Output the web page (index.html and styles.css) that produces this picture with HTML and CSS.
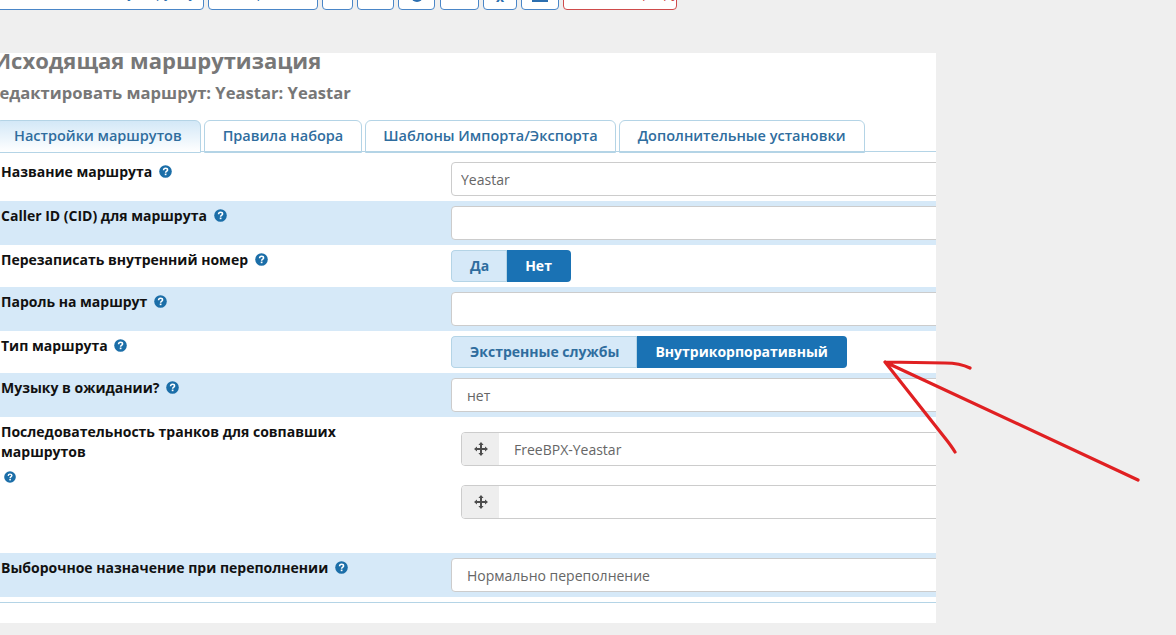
FILE: index.html
```html
<!DOCTYPE html>
<html lang="ru">
<head>
    <meta charset="UTF-8">
    <title>Исходящая маршрутизация</title>
    <link rel="stylesheet" href="styles.css">
</head>
<body>
    <svg class="defs" width="0" height="0">
        <symbol id="help" viewBox="0 0 12 12">
            <circle cx="6" cy="6" r="5.8" fill="#1b6ea8"/>
            <path d="M4.2 4.9C4.3 3.7 5 3.1 6 3.1C7.1 3.1 7.9 3.7 7.9 4.6C7.9 5.7 6.2 5.7 6.1 7.1" fill="none" stroke="#fff" stroke-width="1.4"/>
            <rect x="5.3" y="7.9" width="1.6" height="1.5" fill="#fff"/>
        </symbol>
        <symbol id="move" viewBox="0 0 14 14">
            <path d="M7 1V13M1 7H13" fill="none" stroke="#4d4d4d" stroke-width="2"/>
            <path d="M7 0L9.6 3H4.4ZM7 14L9.6 11H4.4ZM0 7L3 4.4V9.6ZM14 7L11 4.4V9.6Z" fill="#4d4d4d"/>
        </symbol>
    </svg>

    <div class="toolbar">
        <button class="tool tool-wide">Добавить исходящую группу</button>
        <button class="tool tool-mid">Копировать</button>
        <button class="tool tool-s1 tool-icon">•</button>
        <button class="tool tool-s2"></button>
        <button class="tool tool-s3 tool-icon"><span class="tool-round"></span></button>
        <button class="tool tool-s4"></button>
        <button class="tool tool-s3b tool-icon">x</button>
        <button class="tool tool-s5 tool-icon"><span class="tool-bar"></span></button>
        <button class="tool tool-red">Удалить маршрут</button>
    </div>

    <div class="panel">
        <h2 class="title">Исходящая маршрутизация</h2>
        <h3 class="subtitle">Редактировать маршрут: Yeastar: Yeastar</h3>

        <ul class="tabs">
            <li class="tab tab-active">Настройки маршрутов</li>
            <li class="tab">Правила набора</li>
            <li class="tab tab-narrow">Шаблоны Импорта/Экспорта</li>
            <li class="tab">Дополнительные установки</li>
        </ul>

        <div class="row row-first">
            <label class="label">Название маршрута <svg class="help"><use href="#help"/></svg></label>
            <input class="field" type="text" value="Yeastar">
        </div>
        <div class="row row-blue">
            <label class="label">Caller ID (CID) для маршрута <svg class="help"><use href="#help"/></svg></label>
            <input class="field" type="text">
        </div>
        <div class="row">
            <label class="label">Перезаписать внутренний номер <svg class="help"><use href="#help"/></svg></label>
            <div class="toggle">
                <span class="opt">Да</span>
                <span class="opt opt-on">Нет</span>
            </div>
        </div>
        <div class="row row-blue">
            <label class="label">Пароль на маршрут <svg class="help"><use href="#help"/></svg></label>
            <input class="field" type="text">
        </div>
        <div class="row">
            <label class="label">Тип маршрута <svg class="help"><use href="#help"/></svg></label>
            <div class="toggle">
                <span class="opt">Экстренные службы</span>
                <span class="opt opt-on">Внутрикорпоративный</span>
            </div>
        </div>
        <div class="row row-blue">
            <label class="label">Музыку в ожидании? <svg class="help"><use href="#help"/></svg></label>
            <input class="field field-select" type="text" value="нет">
        </div>
        <div class="row row-trunks">
            <label class="label label-wrap">Последовательность транков для совпавших маршрутов
                <svg class="help help-block"><use href="#help"/></svg>
            </label>
            <div class="trunks">
                <div class="trunk">
                    <span class="grip"><svg class="move"><use href="#move"/></svg></span>
                    <input class="trunk-input" type="text" value="FreeBPX-Yeastar">
                </div>
                <div class="trunk">
                    <span class="grip"><svg class="move"><use href="#move"/></svg></span>
                    <input class="trunk-input" type="text">
                </div>
            </div>
        </div>
        <div class="row row-blue">
            <label class="label">Выборочное назначение при переполнении <svg class="help"><use href="#help"/></svg></label>
            <input class="field field-select" type="text" value="Нормально переполнение">
        </div>
        <div class="panel-end"></div>
    </div>

    <!-- стрелка нарисована поверх скриншота -->
    <svg class="arrow" width="1176" height="635">
        <path d="M970 368C962 364 955 363 945 363L885 362L1138 480M885 362L945 438C949 443 952 447 955 452" fill="none" stroke="#e02022" stroke-width="3.2" stroke-linecap="round" stroke-linejoin="round"/>
    </svg>
</body>
</html>
```

FILE: styles.css
```css
/*Страница*/
html, body {
    margin: 0;
    height: 635px;
    overflow: hidden;
}

body {
    position: relative;
    background-color: #efefef;
    font-family: "Open Sans", "Noto Sans", sans-serif;
    font-size: 14px;
    color: #111;
}

.defs {
    position: absolute;
}

/*Панель кнопок, срезанная верхним краем окна*/
.toolbar {
    display: flex;
    height: 53px;
    margin-left: -10px;
}

.tool {
    height: 40px;
    margin-top: -30px;
    margin-right: 4px;
    padding: 3px 0 0;
    border: 1px solid #4a86c8;
    border-radius: 4px;
    background-color: #fff;
    color: #2c6fb0;
    font-family: inherit;
    font-size: 14px;
    line-height: 20px;
    overflow: hidden;
    white-space: nowrap;
}

.tool-icon {
    padding-top: 14px;
}

.tool-wide {
    width: 214px;
}

.tool-mid {
    width: 110px;
}

.tool-s1 {
    width: 31px;
}

.tool-s2 {
    width: 37px;
}

.tool-s3 {
    width: 37px;
    margin-right: 5px;
}

.tool-s4 {
    width: 39px;
}

.tool-s3b {
    width: 34px;
    font-weight: 700;
}

.tool-s5 {
    width: 38px;
}

.tool-red {
    width: 114px;
    margin-right: 0;
    border-color: #cf4b4b;
    color: #cf4b4b;
}

.tool-round {
    display: inline-block;
    width: 12px;
    height: 12px;
    border-radius: 50%;
    background-color: #2c6fb0;
}

.tool-bar {
    display: inline-block;
    width: 16px;
    height: 12px;
    background-color: #2c6fb0;
}

/*Белая панель с формой*/
.panel {
    width: 936px;
    height: 570px;
    background-color: #fff;
    overflow: hidden;
}

.title {
    margin: -2px 0 0 -7px;
    font-size: 22px;
    line-height: 18px;
    font-weight: 700;
    color: #777;
}

.subtitle {
    margin: 14px 0 0 -11px;
    font-size: 16.6px;
    line-height: 20px;
    font-weight: 700;
    color: #777;
}

/*Вкладки*/
.tabs {
    display: flex;
    gap: 3px;
    height: 31px;
    margin: 17px 0 0;
    padding: 0;
    list-style: none;
    border-bottom: 1px solid #b4d4e6;
}

.tab {
    height: 31px;
    padding: 0 18px;
    border: 1px solid #b4d4e6;
    border-radius: 6px 6px 0 0;
    font-size: 14.5px;
    font-weight: 600;
    line-height: 30px;
    color: #2f6d9e;
    white-space: nowrap;
}

.tab-active {
    margin-left: -5px;
    background: linear-gradient(#d3e8f7, #fff);
}

.tab-narrow {
    padding-right: 17px;
    padding-left: 17px;
}

/*Строки формы*/
.row {
    display: grid;
    grid-template-columns: 451px 1fr;
    padding: 5px 0;
}

.row-first {
    padding-top: 10px;
}

.row-blue {
    background-color: #d6e9f8;
}

.row-trunks {
    padding-bottom: 34px;
}

.label {
    padding-left: 1px;
    font-weight: 700;
    line-height: 20px;
}

.label-wrap {
    display: block;
    max-width: 345px;
}

.help {
    width: 13px;
    height: 13px;
    margin-left: 3px;
    vertical-align: -1px;
}

.help-block {
    display: block;
    width: 12px;
    height: 12px;
    margin: 9px 0 0 3px;
}

.field {
    box-sizing: border-box;
    width: 600px;
    height: 34px;
    padding: 0 9px;
    border: 1px solid #ccc;
    border-radius: 4px;
    background-color: #fff;
    color: #666;
    font-family: inherit;
    font-size: 14px;
}

.field-select {
    padding-left: 15px;
}

/*Переключатели*/
.toggle {
    display: flex;
    justify-self: start;
    height: 32px;
    border-radius: 4px;
    overflow: hidden;
}

.opt {
    padding: 0 18px 0 19px;
    background-color: #d6e9f8;
    box-shadow: inset 0 0 0 1px #b4d4e6;
    border-radius: 4px 0 0 4px;
    color: #2f6d9e;
    font-weight: 700;
    line-height: 32px;
}

.opt-on {
    padding: 0 19px 0 18px;
    background-color: #1a72b4;
    box-shadow: none;
    border-radius: 0;
    color: #fff;
}

/*Транки*/
.trunks {
    display: flex;
    flex-direction: column;
    gap: 19px;
    padding: 10px 0 0 10px;
}

.trunk {
    display: flex;
    box-sizing: border-box;
    width: 600px;
    height: 34px;
    border: 1px solid #ccc;
    border-radius: 4px;
    overflow: hidden;
}

.grip {
    display: flex;
    align-items: center;
    justify-content: center;
    width: 37px;
    background-color: #eee;
}

.move {
    width: 14px;
    height: 14px;
}

.trunk-input {
    flex: 1;
    padding: 0 15px;
    border: 0;
    color: #666;
    font-family: inherit;
    font-size: 14px;
}

.panel-end {
    height: 5px;
    border-bottom: 1px solid #b4d4e6;
}

/*Красная стрелка поверх всего*/
.arrow {
    position: absolute;
    top: 0;
    left: 0;
    pointer-events: none;
}
```
